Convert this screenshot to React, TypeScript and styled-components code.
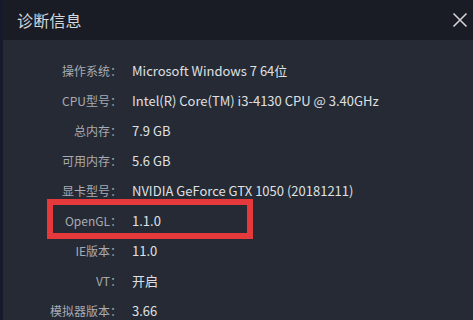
import React from "react";
import styled, { createGlobalStyle, css } from "styled-components";

const Global = createGlobalStyle`
  html, body { margin: 0; padding: 0; background: #262a34; }
  body { font-family: "Noto Sans CJK SC", "Noto Sans", sans-serif; }
`;

const Window = styled.div`
  width: 473px;
  height: 320px;
  overflow: hidden;
  display: flex;
  flex-direction: column;
  background: #262a34;
  border-left: 3px solid #141a2c;
  box-sizing: border-box;
`;

const Header = styled.div`
  height: 40px;
  flex: none;
  display: flex;
  align-items: center;
  justify-content: space-between;
  padding: 0 0 0 14px;
  background: #1a1c25;
`;

const Title = styled.div`
  font-size: 16px;
  color: #d6d7da;
  letter-spacing: 0.2px;
`;

const Close = styled.button`
  width: 26px;
  height: 30px;
  border: 0;
  background: transparent;
  padding: 0;
  display: flex;
  align-items: center;
  justify-content: center;
  color: #d0d1d4;
`;

const Body = styled.div`
  padding-top: 15px;
  display: flex;
  flex-direction: column;
`;

const Row = styled.div<{ $highlight?: boolean }>`
  position: relative;
  height: 30px;
  display: grid;
  grid-template-columns: 119px 1fr;
  column-gap: 10px;
  align-items: center;
  ${(p) =>
    p.$highlight &&
    css`
      &::after {
        content: "";
        position: absolute;
        left: 44px;
        width: 206px;
        top: -6px;
        bottom: -4px;
        border: 6px solid #e5393b;
        box-sizing: border-box;
      }
    `}
`;

const Label = styled.div`
  font-size: 12px;
  text-align: right;
  color: #a8abb2;
  white-space: nowrap;
`;

const Value = styled.div`
  font-size: 13px;
  color: #dfe0e3;
  white-space: nowrap;
`;

const rows: { label: string; value: string; highlight?: boolean }[] = [
  { label: "操作系统：", value: "Microsoft Windows 7 64位" },
  { label: "CPU型号：", value: "Intel(R) Core(TM) i3-4130 CPU @ 3.40GHz" },
  { label: "总内存：", value: "7.9 GB" },
  { label: "可用内存：", value: "5.6 GB" },
  { label: "显卡型号：", value: "NVIDIA GeForce GTX 1050 (20181211)" },
  { label: "OpenGL：", value: "1.1.0", highlight: true },
  { label: "IE版本：", value: "11.0" },
  { label: "VT：", value: "开启" },
  { label: "模拟器版本：", value: "3.66" },
];

export default function App() {
  return (
    <>
      <Global />
      <Window>
        <Header>
          <Title>诊断信息</Title>
          <Close aria-label="关闭">
            <svg width="16" height="16" viewBox="0 0 16 16">
              <path d="M1.5 1.5 L14.5 14.5 M14.5 1.5 L1.5 14.5" stroke="currentColor" strokeWidth="1.6" />
            </svg>
          </Close>
        </Header>
        <Body>
          {rows.map((r) => (
            <Row key={r.label} $highlight={r.highlight}>
              <Label>{r.label}</Label>
              <Value>{r.value}</Value>
            </Row>
          ))}
        </Body>
      </Window>
    </>
  );
}
